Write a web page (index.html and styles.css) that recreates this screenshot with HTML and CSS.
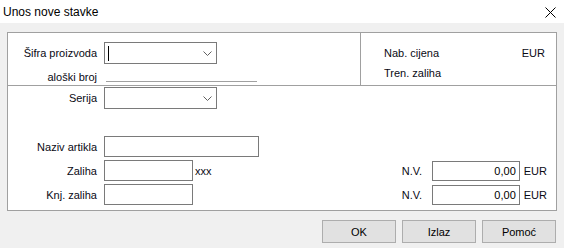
FILE: index.html
```html
<!doctype html>
<html lang="hr">
<head>
    <meta charset="utf-8">
    <title>Unos nove stavke</title>
    <link rel="stylesheet" href="styles.css">
</head>
<body>
    <div class="titlebar">
        <span class="title">Unos nove stavke</span>
        <svg class="close" width="11" height="11" viewBox="0 0 11 11">
            <path d="M0.5 0.5 L10.5 10.5 M10.5 0.5 L0.5 10.5" stroke="#000" stroke-width="1" fill="none"/>
        </svg>
    </div>

    <div class="dialog">
        <div class="group top">
            <div class="top-left">
                <div class="row">
                    <label class="lbl">Šifra proizvoda</label>
                    <div class="combo">
                        <span class="caret"></span>
                        <svg class="chevron" width="9" height="5" viewBox="0 0 9 5"><path d="M0.5 0.5 L4.5 4.5 L8.5 0.5" stroke="#606060" fill="none"/></svg>
                    </div>
                </div>
                <div class="row row-catalog">
                    <label class="lbl">aloški broj</label>
                    <div class="underline"></div>
                </div>
            </div>
            <div class="top-right">
                <div class="info"><span>Nab. cijena</span><span>EUR</span></div>
                <div class="info"><span>Tren. zaliha</span></div>
            </div>
        </div>

        <div class="group bottom">
            <div class="row">
                <label class="lbl">Serija</label>
                <div class="combo">
                    <svg class="chevron" width="9" height="5" viewBox="0 0 9 5"><path d="M0.5 0.5 L4.5 4.5 L8.5 0.5" stroke="#606060" fill="none"/></svg>
                </div>
            </div>
            <div class="row row-name">
                <label class="lbl">Naziv artikla</label>
                <input class="field wide" type="text">
            </div>
            <div class="row">
                <label class="lbl">Zaliha</label>
                <input class="field short" type="text">
                <span class="unit">xxx</span>
                <div class="nv">
                    <label class="nv-lbl">N.V.</label>
                    <input class="field num" type="text" value="0,00">
                    <span class="cur">EUR</span>
                </div>
            </div>
            <div class="row">
                <label class="lbl">Knj. zaliha</label>
                <input class="field short" type="text">
                <div class="nv">
                    <label class="nv-lbl">N.V.</label>
                    <input class="field num" type="text" value="0,00">
                    <span class="cur">EUR</span>
                </div>
            </div>
        </div>

        <div class="buttons">
            <button>OK</button>
            <button>Izlaz</button>
            <button>Pomoć</button>
        </div>
    </div>
</body>
</html>
```

FILE: styles.css
```css
body {
    margin: 0;
    width: 564px;
    height: 248px;
    background-color: #f0f0f0;
    font-family: "Liberation Sans", Arial, sans-serif;
    font-size: 11px;
    color: #0a0a14;
    overflow: hidden;
}
.titlebar {
    height: 23px;
    background-color: #ffffff;
    display: flex;
    align-items: center;
    justify-content: space-between;
    padding: 0 8px 0 3px;
}
.title {
    font-size: 12px;
    margin-top: 1px;
    color: #000;
}
.close {
    margin-top: 1px;
}
.dialog {
    padding: 9px 7px 0 7px;
}
.group {
    background-color: #ffffff;
    border: 1px solid #a0a0a0;
}
.top {
    display: flex;
    height: 52px;
}
.top-left {
    width: 352px;
    padding-top: 9px;
    border-right: 1px solid #a0a0a0;
}
.top-right {
    flex: 1;
    padding: 10px 11px 0 23px;
}
.info {
    display: flex;
    justify-content: space-between;
    height: 20px;
    line-height: 20px;
}
.row {
    display: flex;
    align-items: center;
    margin-bottom: 3px;
}
.lbl {
    width: 89px;
    text-align: right;
    margin-right: 7px;
    white-space: nowrap;
}
.row-catalog {
    height: 16px;
    margin-top: 2px;
    align-items: flex-end;
}
.underline {
    width: 151px;
    margin-left: 2px;
    border-bottom: 1px solid #a0a0a0;
    margin-bottom: 1px;
}
.combo {
    position: relative;
    width: 107px;
    height: 20px;
    border: 1px solid #7a7a7a;
    background-color: #ffffff;
    display: flex;
    align-items: center;
    justify-content: flex-end;
    padding-right: 4px;
}
.caret {
    position: absolute;
    left: 3px;
    top: 3px;
    width: 1px;
    height: 15px;
    background-color: #000;
}
.bottom {
    border-top: none;
    padding: 1px 0 0 0;
    height: 125px;
    box-sizing: border-box;
}
.row-name {
    margin-top: 27px;
}
.field {
    height: 21px;
    box-sizing: border-box;
    border: 1px solid #7a7a7a;
    background-color: #ffffff;
    font-family: inherit;
    font-size: 11px;
    color: #000;
    padding: 0 3px;
    margin: 0;
    outline: none;
}
.wide {
    width: 155px;
}
.short {
    width: 89px;
}
.unit {
    margin-left: 2px;
}
.nv {
    margin-left: auto;
    display: flex;
    align-items: center;
    padding-right: 9px;
}
.nv-lbl {
    width: 30px;
}
.num {
    width: 88px;
    text-align: right;
    height: 20px;
}
.cur {
    margin-left: 4px;
}
.buttons {
    display: flex;
    justify-content: flex-end;
    gap: 6px;
    margin-top: 9px;
    padding-right: 1px;
}
button {
    width: 74px;
    height: 23px;
    background-color: #e1e1e1;
    border: 1px solid #adadad;
    font-family: inherit;
    font-size: 11px;
    color: #000;
    padding: 0;
}
```
